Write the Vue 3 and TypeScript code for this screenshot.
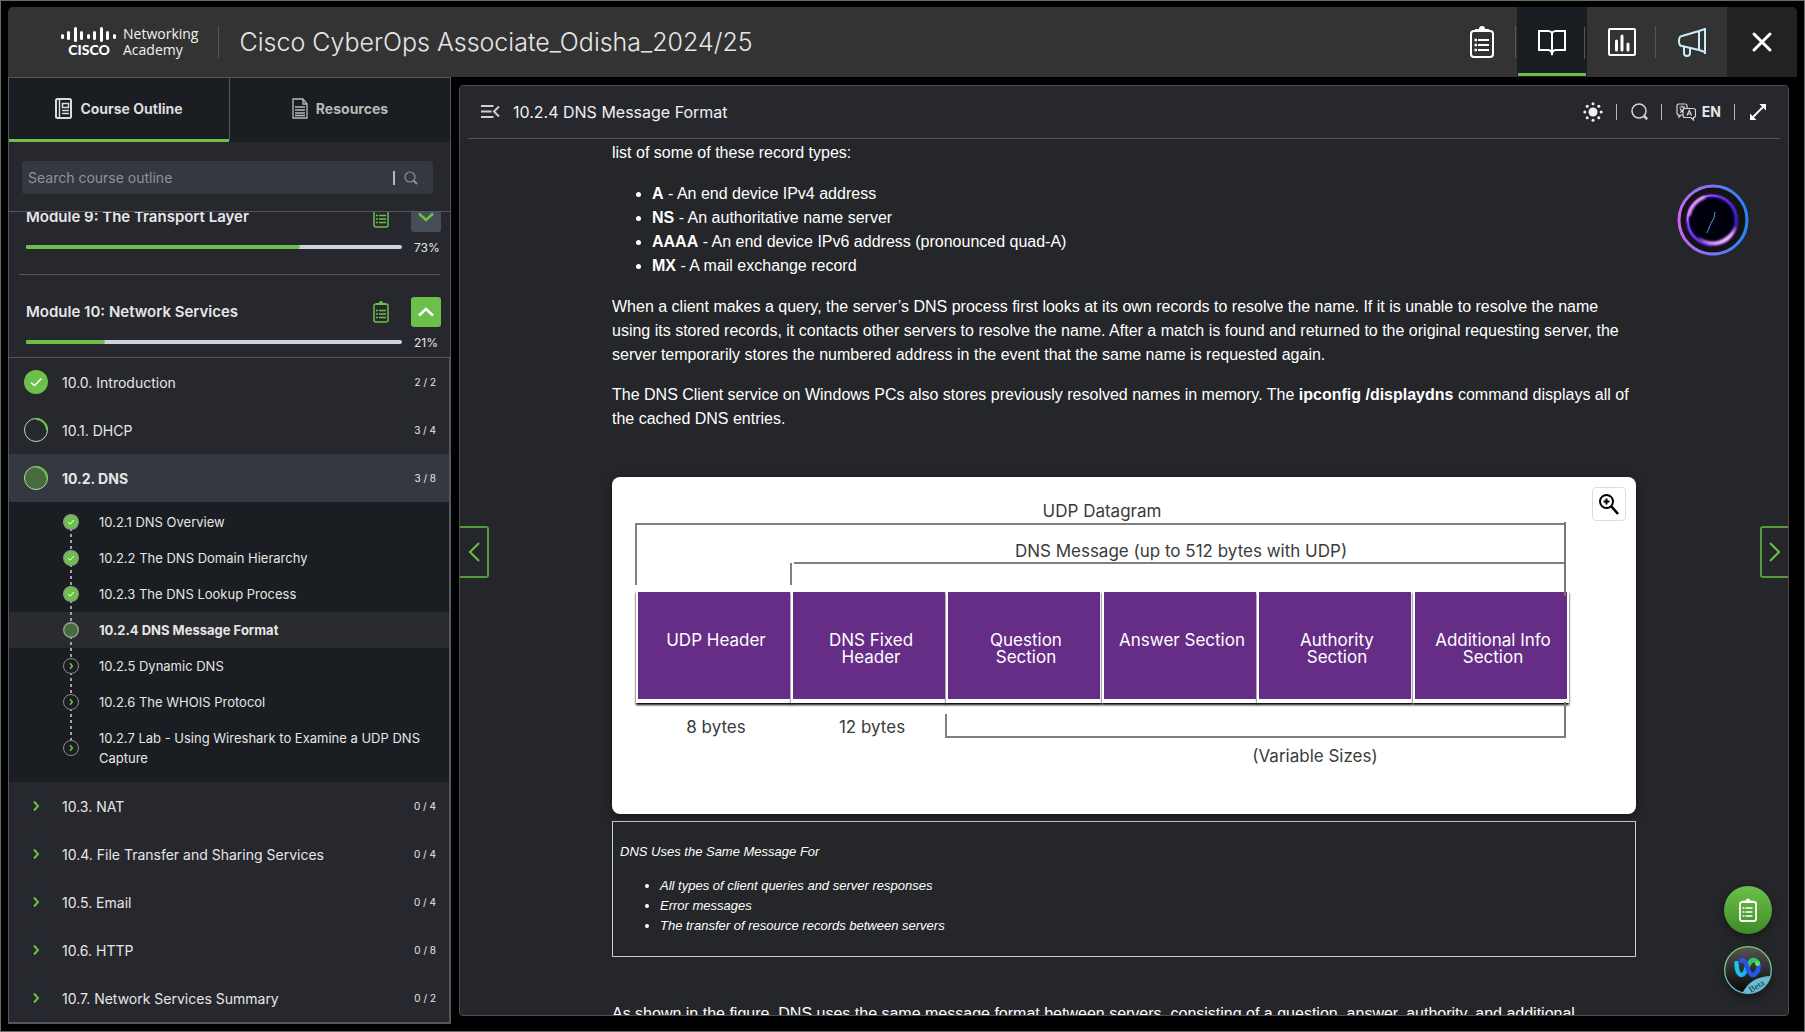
<script setup lang="ts">
import { ref } from 'vue'

type State = 'done' | 'partial' | 'current' | 'todo'

interface Topic {
  label: string
  state: State
}

interface Section {
  label: string
  count: string
  state: State
  topics?: Topic[]
}

const query = ref('')

const sections: Section[] = [
  { label: '10.0. Introduction', count: '2 / 2', state: 'done' },
  { label: '10.1. DHCP', count: '3 / 4', state: 'partial' },
  {
    label: '10.2. DNS',
    count: '3 / 8',
    state: 'current',
    topics: [
      { label: '10.2.1 DNS Overview', state: 'done' },
      { label: '10.2.2 The DNS Domain Hierarchy', state: 'done' },
      { label: '10.2.3 The DNS Lookup Process', state: 'done' },
      { label: '10.2.4 DNS Message Format', state: 'current' },
      { label: '10.2.5 Dynamic DNS', state: 'todo' },
      { label: '10.2.6 The WHOIS Protocol', state: 'todo' },
      { label: '10.2.7 Lab - Using Wireshark to Examine a UDP DNS Capture', state: 'todo' },
    ],
  },
  { label: '10.3. NAT', count: '0 / 4', state: 'todo' },
  { label: '10.4. File Transfer and Sharing Services', count: '0 / 4', state: 'todo' },
  { label: '10.5. Email', count: '0 / 4', state: 'todo' },
  { label: '10.6. HTTP', count: '0 / 8', state: 'todo' },
  { label: '10.7. Network Services Summary', count: '0 / 2', state: 'todo' },
]

const modules = [
  { title: 'Module 9: The Transport Layer', percent: 73, open: false },
  { title: 'Module 10: Network Services', percent: 21, open: true },
]

const records = [
  { name: 'A', text: 'An end device IPv4 address' },
  { name: 'NS', text: 'An authoritative name server' },
  { name: 'AAAA', text: 'An end device IPv6 address (pronounced quad-A)' },
  { name: 'MX', text: 'A mail exchange record' },
]

const logoBars = [
  [1, 7, 5], [7, 4, 9], [14, 0, 15], [20, 4, 9], [27, 7, 5], [33, 4, 9], [40, 0, 15], [46, 4, 9], [53, 7, 5],
]

const fields = [
  { x: 26, lines: ['UDP Header'] },
  { x: 181, lines: ['DNS Fixed', 'Header'] },
  { x: 336, lines: ['Question', 'Section'] },
  { x: 492, lines: ['Answer Section'] },
  { x: 647, lines: ['Authority', 'Section'] },
  { x: 803, lines: ['Additional Info', 'Section'] },
]
</script>

<template>
  <div class="frame">
    <header class="topbar">
      <div class="brand">
        <div class="cisco">
          <svg width="56" height="16" viewBox="0 0 56 16" aria-hidden="true">
            <rect v-for="b in logoBars" :key="b[0]" :x="b[0] - 1" :y="b[1]" width="3" :height="b[2]" rx="1.5" fill="#fff" />
          </svg>
          <span class="cisco-name">CISCO</span>
        </div>
        <div class="academy">Networking<br />Academy</div>
      </div>
      <h1>Cisco CyberOps Associate_Odisha_2024/25</h1>
      <nav class="topnav">
        <button type="button" aria-label="Tasks" class="divided">
          <svg width="24" height="32" viewBox="0 0 24 32" fill="none" stroke="#fff">
            <rect x="1" y="5" width="22" height="26" rx="3" stroke-width="2" />
            <path d="M5 6V3h4a3 3 0 0 1 6 0h4v3z" fill="#fff" stroke="none" />
            <path d="M8 14h11M8 19h11M8 24h11" stroke-width="2" />
            <path d="M4.500 14h2.500M4.500 19h2.500M4.500 24h2.500" stroke-width="2.400" />
          </svg>
        </button>
        <button type="button" aria-label="Course content" class="active divided">
          <svg width="30" height="28" viewBox="0 0 30 28" fill="none" stroke="#fff" stroke-width="2">
            <path d="M15 5Q14 3 11 3H2v19h9q3 0 4 3 1-3 4-3h9V3h-9q-3 0-4 2zM15 5v22" />
          </svg>
        </button>
        <button type="button" aria-label="Grades" class="divided">
          <svg width="28" height="28" viewBox="0 0 28 28" fill="none" stroke="#fff">
            <rect x="1" y="1" width="26" height="26" rx="1" stroke-width="2" />
            <path d="M8.500 13v9M14 8v14M20 16v6" stroke-width="3" stroke-linecap="round" />
          </svg>
        </button>
        <button type="button" aria-label="Announcements">
          <svg width="30" height="30" viewBox="0 0 30 30" fill="none" stroke="#c9ecf8" stroke-width="2" stroke-linejoin="round">
            <path d="M22 4L5 9q-3 0-3 5t3 5l17 4" />
            <path d="M22 4v19M28 1v26" />
            <path d="M22 4l6-2M22 23l6 2" />
            <path d="M7 20v6q0 3 3 3t3-3v-5" />
          </svg>
        </button>
        <button type="button" aria-label="Close" class="close">
          <svg width="22" height="22" viewBox="0 0 22 22" stroke="#fff" stroke-width="3" stroke-linecap="round">
            <path d="M3 3l16 16M19 3L3 19" />
          </svg>
        </button>
      </nav>
    </header>

    <div class="body">
      <aside class="sidebar">
        <div class="tabs">
          <button type="button" class="tab on">
            <svg width="17" height="21" viewBox="0 0 17 21" fill="none" stroke="currentColor">
              <rect x="1" y="1" width="15" height="19" rx="1.500" stroke-width="2" />
              <path d="M4.500 1v19" stroke-width="1.500" />
              <rect x="7.500" y="5.500" width="6" height="4" stroke-width="1.500" />
              <path d="M7 12.500h7M7 15.500h7" stroke-width="1.500" />
            </svg>
            Course Outline
          </button>
          <button type="button" class="tab">
            <svg width="16" height="21" viewBox="0 0 16 21" fill="none" stroke="currentColor" stroke-width="1.300">
              <path d="M1 1h10l4 5v14H1zM11 1v5h4" />
              <path d="M3 9h10M3 12h10M3 15h10M3 17.500h10" />
            </svg>
            Resources
          </button>
        </div>

        <label class="search">
          <input v-model="query" type="text" placeholder="Search course outline" aria-label="Search course outline" />
          <i class="bar"></i>
          <svg width="14" height="14" viewBox="0 0 14 14" fill="none" stroke="#8b8f94">
            <circle cx="6" cy="6" r="5" stroke-width="1.200" />
            <path d="M9.800 9.800l3.200 3.200" stroke-width="2" />
          </svg>
        </label>

        <div class="outline">
          <div class="outline-inner">
            <section v-for="m in modules" :key="m.title" class="module">
              <div class="module-head">
                <h2>{{ m.title }}</h2>
                <svg width="16" height="22" viewBox="0 0 16 22" fill="none" stroke="#6cc04a">
                  <rect x="1" y="3" width="14" height="18" rx="2" stroke-width="1.500" />
                  <path d="M3 4V2h3a2 2 0 0 1 4 0h3v2z" fill="#6cc04a" stroke="none" />
                  <path d="M6 9.500h7M6 13h7M6 16.500h7" stroke-width="1.500" />
                  <path d="M3 9.500h2M3 13h2M3 16.500h2" stroke-width="1.500" />
                </svg>
                <button type="button" class="toggle" :class="{ open: m.open }" :aria-label="m.open ? 'Collapse' : 'Expand'">
                  <svg width="16" height="10" viewBox="0 0 16 10" fill="none" stroke="currentColor" stroke-width="2.500">
                    <path :d="m.open ? 'M1 8.500L8 2l7 6.500' : 'M1 1.500L8 8l7-6.500'" />
                  </svg>
                </button>
              </div>
              <div class="progress">
                <div class="track"><div class="fill" :style="{ width: m.percent + '%' }"></div></div>
                <span>{{ m.percent }}%</span>
              </div>
            </section>

            <ul class="sections">
              <li v-for="s in sections" :key="s.label">
                <a href="#" class="row" :class="s.state">
                  <svg width="24" height="24" viewBox="0 0 24 24" fill="none">
                    <template v-if="s.state === 'done'">
                      <circle cx="12" cy="12" r="12" fill="#6cc04a" />
                      <path d="M7 12.500l3.500 3L17.500 8.500" stroke="#fff" stroke-width="1.500" />
                    </template>
                    <template v-else-if="s.state === 'todo'">
                      <circle cx="12" cy="12" r="11.500" stroke="#222f40" />
                      <path d="M10 7.500l4 4.500-4 4.500" stroke="#6cc04a" stroke-width="2" />
                    </template>
                    <template v-else>
                      <circle cx="12" cy="12" r="11.500" :fill="s.state === 'current' ? '#49693f' : 'none'" stroke="#b5dba6" />
                      <path d="M12 1a11 11 0 0 1 11 11" stroke="#6cc04a" stroke-width="2" />
                    </template>
                  </svg>
                  <span class="name">{{ s.label }}</span>
                  <span class="count">{{ s.count }}</span>
                </a>
                <ul v-if="s.topics" class="topics">
                  <li v-for="t in s.topics" :key="t.label">
                    <a href="#" class="topic" :class="t.state">
                      <svg width="16" height="16" viewBox="0 0 16 16" fill="none">
                        <circle v-if="t.state === 'done'" cx="8" cy="8" r="7.300" fill="#6cc04a" stroke="#8d9a89" stroke-width="1.400" />
                        <circle v-else-if="t.state === 'current'" cx="8" cy="8" r="7.300" fill="#49693f" stroke="#93a38d" stroke-width="1.400" />
                        <circle v-else cx="8" cy="8" r="7.500" fill="#1a1d21" stroke="#8a8d90" />
                        <path v-if="t.state === 'done'" d="M5 8.200l2 2L11 6" stroke="#fff" />
                        <path v-if="t.state === 'todo'" d="M7 5.200L9.300 8 7 10.800" stroke="#6cc04a" stroke-width="1.600" />
                      </svg>
                      <span>{{ t.label }}</span>
                    </a>
                  </li>
                </ul>
              </li>
            </ul>
          </div>
        </div>
      </aside>

      <main class="reader">
        <div class="reader-head">
          <button type="button" class="tool" aria-label="Collapse outline">
            <svg width="19" height="13" viewBox="0 0 19 13" fill="none" stroke="#d0d0d2" stroke-width="2">
              <path d="M0 1h12.500M0 6.500h10.500M0 12h12.500M18 1.500L13 6.500l5 5" />
            </svg>
          </button>
          <h2>10.2.4 DNS Message Format</h2>
          <div class="tools">
            <button type="button" class="tool sun" aria-label="Theme">
              <svg width="20" height="20" viewBox="0 0 20 20" fill="#f0f0f0">
                <circle cx="10" cy="10" r="4.500" />
                <circle cx="10" cy="1.800" r="1.500" /><circle cx="10" cy="18.200" r="1.500" />
                <circle cx="1.800" cy="10" r="1.500" /><circle cx="18.200" cy="10" r="1.500" />
                <circle cx="4.200" cy="4.200" r="1.500" /><circle cx="15.800" cy="4.200" r="1.500" />
                <circle cx="4.200" cy="15.800" r="1.500" /><circle cx="15.800" cy="15.800" r="1.500" />
              </svg>
            </button>
            <button type="button" class="tool find" aria-label="Search">
              <svg width="17" height="17" viewBox="0 0 17 17" fill="none" stroke="#d4d4d4">
                <circle cx="8" cy="8" r="7" stroke-width="1.500" />
                <path d="M12.500 12.500l3.700 3.700" stroke-width="2.500" />
              </svg>
            </button>
            <button type="button" class="tool lang">
              <svg width="20" height="18" viewBox="0 0 20 18" fill="none" stroke="#d4d4d4" stroke-width="1.200">
                <path d="M7 12H5l-2 2v-2q-2 0-2-2V3q0-2 2-2h6q2 0 2 2v2" />
                <path d="M3.500 4h5.500M6.200 2.500v1.500M4 9.500Q7.500 8 8 4M4.200 5.500q1 3 3 3.500" />
                <path d="M9 5.500h8.500q2 0 2 2v5q0 2-2 2v2.500L15 14.500H9q-2 0-2-2v-5q0-2 2-2z" fill="#27282d" />
                <path d="M11 12.500L13.300 7.500l2.300 5M11.800 11h3" />
              </svg>
              EN
            </button>
            <button type="button" class="tool" aria-label="Full screen">
              <svg width="18" height="18" viewBox="0 0 18 18" fill="#fff" stroke="#fff">
                <path d="M4 14L14 4" stroke-width="1.800" />
                <path d="M10.500 1H17v6.500zM1 10.500V17h6.500z" stroke="none" />
              </svg>
            </button>
          </div>
        </div>

        <div class="page">
          <article>
            <p>list of some of these record types:</p>
            <ul>
              <li v-for="r in records" :key="r.name"><strong>{{ r.name }}</strong> - {{ r.text }}</li>
            </ul>
            <p>
              When a client makes a query, the server’s DNS process first looks at its own records to resolve the name. If it is unable to resolve the name
              using its stored records, it contacts other servers to resolve the name. After a match is found and returned to the original requesting server, the
              server temporarily stores the numbered address in the event that the same name is requested again.
            </p>
            <p>
              The DNS Client service on Windows PCs also stores previously resolved names in memory. The <strong>ipconfig /displaydns</strong> command displays all of
              the cached DNS entries.
            </p>

            <figure>
              <svg class="diagram" viewBox="0 0 1024 337" role="img" aria-label="UDP datagram layout">
                <defs>
                  <filter id="drop" x="-5%" y="-10%" width="110%" height="125%">
                    <feDropShadow dx="0" dy="2" stdDeviation="1.200" flood-color="#000" flood-opacity="1" />
                  </filter>
                </defs>
                <g fill="none" stroke="#808080" stroke-width="2">
                  <path d="M24 108V47H953" />
                  <path d="M179 108V86M182 86H953" />
                  <path d="M334 237V260H954" />
                </g>
                <g v-for="f in fields" :key="f.x">
                  <rect :x="f.x - 2" y="114" width="156" height="112" fill="#fff" filter="url(#drop)" />
                </g>
                <rect x="22" y="108" width="937" height="6" fill="#fff" />
                <g v-for="f in fields" :key="f.x">
                  <rect :x="f.x" y="115" width="152" height="107" fill="#662d87" />
                  <text v-for="(line, i) in f.lines" :key="line" class="inbox" :x="f.x + 78" :y="169 + i * 17">{{ line }}</text>
                </g>
                <path d="M953 45V119M953 225V261" stroke="#777" stroke-width="2" />
                <text x="490" y="40">UDP Datagram</text>
                <text x="569" y="80">DNS Message (up to 512 bytes with UDP)</text>
                <text x="104" y="256">8 bytes</text>
                <text x="260" y="256">12 bytes</text>
                <text x="703" y="285">(Variable Sizes)</text>
              </svg>
              <button type="button" class="zoom" aria-label="Zoom in">
                <svg width="20" height="21" viewBox="0 0 20 21" fill="none" stroke="#000" stroke-width="2">
                  <circle cx="7.500" cy="7.500" r="6.500" />
                  <path d="M12 12l7 8" stroke-width="2.600" />
                  <path d="M4.500 7.500h6M7.500 4.500v6" stroke-width="2" />
                </svg>
              </button>
            </figure>

            <div class="note">
              <p>DNS Uses the Same Message For</p>
              <ul>
                <li>All types of client queries and server responses</li>
                <li>Error messages</li>
                <li>The transfer of resource records between servers</li>
              </ul>
            </div>

            <p>
              As shown in the figure, DNS uses the same message format between servers, consisting of a question, answer, authority, and additional
              information for all types of client queries and server responses, error messages, and the transfer of resource record information.
            </p>
          </article>
        </div>

        <button type="button" class="pager prev" aria-label="Previous">
          <svg width="12" height="20" viewBox="0 0 12 20" fill="none" stroke="#6cc04a" stroke-width="2"><path d="M11 1L2 10l9 9" /></svg>
        </button>
        <button type="button" class="pager next" aria-label="Next">
          <svg width="12" height="20" viewBox="0 0 12 20" fill="none" stroke="#6cc04a" stroke-width="2"><path d="M1 1l9 9-9 9" /></svg>
        </button>

        <button type="button" class="orb" aria-label="Assistant">
          <svg width="72" height="72" viewBox="0 0 72 72" fill="none">
            <defs>
              <linearGradient id="ring" x1="0" y1="0" x2="1" y2="0"><stop offset="0" stop-color="#c766f5" /><stop offset="1" stop-color="#2484ff" /></linearGradient>
              <linearGradient id="glow" x1="0" y1="0" x2="1" y2="0.600"><stop offset="0" stop-color="#e08cff" /><stop offset="0.500" stop-color="#7a2fe0" /><stop offset="1" stop-color="#3a1fb0" /></linearGradient>
              <filter id="soft"><feGaussianBlur stdDeviation="1" /></filter>
            </defs>
            <circle cx="36" cy="36" r="34" fill="#14130f" stroke="url(#ring)" stroke-width="3" />
            <circle cx="35" cy="36" r="24.500" fill="#03020a" stroke="#3a1fb0" stroke-width="3" filter="url(#soft)" />
            <circle cx="35" cy="36" r="24.500" stroke="url(#glow)" stroke-width="2" />
            <path d="M12 32q3-14 16-19" stroke="#f7a0f7" stroke-width="2.500" filter="url(#soft)" />
            <path d="M22 54q20 12 37-11-3 12-13 16-14 5-24-5z" fill="#ffd6ff" stroke="#c86cf5" filter="url(#soft)" />
            <path d="M10 38q2 20 24 24" stroke="#5a2be0" stroke-width="1.200" />
            <path d="M38 28l-1 6-3 5-4 10" stroke="#3f9be0" />
          </svg>
        </button>

        <div class="fabs">
          <button type="button" class="fab tasks" aria-label="Open tasks">
            <svg width="18" height="24" viewBox="0 0 18 24" fill="none" stroke="#fff">
              <rect x="1" y="4" width="16" height="19" rx="2" stroke-width="1.800" />
              <path d="M4 5V2.500h3a2 2 0 0 1 4 0h3V5z" fill="#fff" stroke="none" />
              <path d="M6.500 10h7M6.500 14h7M6.500 18h7M3.500 10h2M3.500 14h2M3.500 18h2" stroke-width="1.600" />
            </svg>
          </button>
          <button type="button" class="fab webex" aria-label="Webex beta">
            <svg width="48" height="48" viewBox="0 0 48 48" fill="none">
              <defs>
                <linearGradient id="wbg" x1="0" y1="0" x2="0" y2="1"><stop offset="0" stop-color="#555" /><stop offset="1" stop-color="#050505" /></linearGradient>
                <linearGradient id="wring" x1="0" y1="0" x2="0" y2="1"><stop offset="0" stop-color="#7cc35f" /><stop offset="1" stop-color="#62b8d8" /></linearGradient>
                <linearGradient id="wl" x1="0" y1="0" x2="1" y2="0"><stop offset="0" stop-color="#19c8f0" /><stop offset="1" stop-color="#2f9ff5" /></linearGradient>
                <clipPath id="disc"><circle cx="24" cy="24" r="23.500" /></clipPath>
              </defs>
              <circle cx="24" cy="24" r="23.500" fill="url(#wbg)" />
              <g stroke-linecap="round" stroke-width="4.500">
                <path d="M34 17q-2-3-5-3-3 1-5 6" stroke="#35c46a" />
                <path d="M12.500 17q0 11 5 12 3 0 5-7" stroke="url(#wl)" />
                <path d="M17 14.500q4-1 6 6t5 8.500q6 0 7-10" stroke="#2456ee" />
              </g>
              <circle cx="33.500" cy="17.500" r="2.500" fill="#5ce05f" />
              <path d="M18 48q8-18 30-18v18z" fill="#66bcd0" clip-path="url(#disc)" />
              <circle cx="24" cy="24" r="23.300" stroke="url(#wring)" stroke-width="1.300" />
              <text x="33" y="43" class="beta" transform="rotate(-32 33 41)">Beta</text>
            </svg>
          </button>
        </div>
      </main>
    </div>
  </div>
</template>

<style>
html, body, #app { height: 100%; }
body { margin: 0; background: #000; }
</style>

<style scoped>
* { box-sizing: border-box; }
button { font: inherit; color: inherit; background: none; border: 0; padding: 0; margin: 0; cursor: pointer; }
svg { display: block; flex: none; }
a { color: inherit; text-decoration: none; }
h1, h2, p, ul, figure { margin: 0; padding: 0; }

.frame {
  height: 100vh;
  display: flex;
  flex-direction: column;
  padding: 6px 7px 7px;
  border: 1px solid #6b6d6d;
  background: #000;
  color: #e6e6e7;
  font-family: Inter, "Liberation Sans", sans-serif;
}

/* top bar */
.topbar {
  display: flex;
  align-items: center;
  flex: none;
  height: 70px;
  padding-left: 53px;
  background: #333;
  border-radius: 5px 5px 0 0;
  overflow: hidden;
}
.brand { display: flex; align-items: center; gap: 6px; height: 32px; padding-right: 20px; border-right: 1px solid #57565f; }
.cisco { display: flex; flex-direction: column; align-items: center; }
.cisco-name { font: 900 14px/14px Lato, sans-serif; color: #fff; }
.academy { font: 400 14px/16px "Open Sans", sans-serif; color: #f2f2f2; }
h1 { margin-left: 20px; font-size: 25px; font-weight: 300; line-height: 32px; white-space: nowrap; }
.topnav { display: flex; margin-left: auto; height: 100%; }
.topnav button { display: flex; align-items: center; justify-content: center; position: relative; width: 70px; }
.topnav .active { background: #1a1d21; border: 1px solid #1a1d21; }
.topnav .active::before { content: ""; position: absolute; left: 0; right: 0; bottom: 0; height: 3px; background: #6cc04a; }
.topnav .divided::after { content: ""; position: absolute; right: 1px; top: 19px; width: 1px; height: 32px; background: #55555b; }
.topnav .close { background: #222; }

.body { display: flex; flex: 1; min-height: 0; }

/* sidebar */
.sidebar {
  display: flex;
  flex-direction: column;
  flex: 0 0 443px;
  min-height: 0;
  border: 1px solid #55565e;
  background: #27282d;
}
.tabs { display: flex; flex: none; height: 64px; background: #1a1d21; }
.tab {
  display: flex;
  align-items: center;
  justify-content: center;
  gap: 8px;
  flex: 1;
  border-bottom: 3px solid transparent;
  font-size: 14px;
  font-weight: 700;
  color: #b8b9bb;
}
.tab.on { color: #dcdcdd; border-bottom-color: #6cc04a; }
.tab + .tab { border-left: 1px solid #55565e; }
.search {
  display: flex;
  align-items: center;
  flex: none;
  height: 33px;
  margin: 19px 17px 17px 13px;
  padding: 0 15px 0 6px;
  border-radius: 3px;
  background: #34393f;
}
.search input { flex: 1; min-width: 0; padding: 0; border: 0; outline: 0; background: none; color: #e6e6e7; font: 400 14px/20px Inter, sans-serif; }
.search input::placeholder { color: #8f9295; opacity: 1; }
.search .bar { width: 2px; height: 14px; margin-right: 9px; background: #b9b9b0; }

.outline { flex: 1; min-height: 0; overflow: hidden; border-top: 1px solid #55565e; }
.outline-inner { margin-top: -10px; }
.module { padding: 0 9px 13px 17px; }
.module + .module { padding-top: 22px; }
.module:first-child { position: relative; padding-bottom: 26px; }
.module:first-child::after { content: ""; position: absolute; left: 10px; right: 10px; bottom: 0; height: 1px; background: #55565e; }
.module-head { display: flex; align-items: center; height: 30px; }
.module-head h2 { flex: 1; font-size: 15px; font-weight: 600; line-height: 20px; }
.toggle { display: flex; align-items: center; justify-content: center; width: 30px; height: 30px; margin-left: 22px; border-radius: 3px; background: #474e57; color: #6cc04a; }
.toggle.open { background: #6cc04a; color: #fff; }
.progress { display: flex; align-items: center; height: 4px; margin-top: 13px; font-size: 12px; }
.progress span { width: 27px; }
.track { flex: 1; height: 4px; margin-right: 12px; border-radius: 2px; background: #cdd2dc; overflow: hidden; }
.fill { height: 4px; border-radius: 0 2px 2px 0; background: #6cc04a; }

.sections { list-style: none; border-top: 1px solid #55565e; border-right: 1px solid #55565e; border-bottom: 1px solid #55565e; }
.row { display: flex; align-items: center; height: 48px; padding: 0 13px 0 15px; font-size: 14px; }
.row .name { flex: 1; margin-left: 14px; }
.row .count { font-size: 10px; }
.row.current { background: #343840; }
.row.current .name { font-weight: 700; }
.topics { list-style: none; padding: 2px 0 6px; background: #1a1d21; }
.topic { position: relative; display: flex; align-items: center; gap: 20px; padding: 8px 20px 8px 54px; font-size: 13px; line-height: 20px; }
.topic.current { background: #2a2b2e; font-weight: 700; }
.topic svg { position: relative; }
.topic::before { content: ""; position: absolute; left: 61px; top: 0; bottom: 0; width: 2px; background: repeating-linear-gradient(#a0a2a3 0 3px, transparent 3px 6px); }
li:first-child > .topic::before { top: 50%; }
li:last-child > .topic::before { bottom: 50%; }

/* reader */
.reader {
  position: relative;
  display: flex;
  flex-direction: column;
  flex: 1;
  min-width: 0;
  margin: 8px;
  border: 1px solid #4d4e56;
  border-radius: 4px;
  background: #242629;
  overflow: hidden;
}
.reader-head { display: flex; align-items: center; flex: none; height: 53px; padding: 0 21px 2px; background: linear-gradient(#55565b, #55565b) 8px 100% / calc(100% - 16px) 1px no-repeat #27282d; }
.reader-head h2 { margin-left: 13px; font-size: 16px; font-weight: 400; line-height: 24px; color: #f0f0f0; }
.tools { display: flex; align-items: center; margin-left: auto; }
.tool { display: flex; align-items: center; }
.tools .tool + .tool::before { content: ""; width: 1px; height: 16px; margin: 0 14px 0 13px; background: #b5b5b5; }
.lang { font-size: 14px; font-weight: 700; }
.lang svg { margin-right: 6px; }

.page { flex: 1; min-height: 0; overflow: hidden; }
article { max-width: 1024px; margin: 0 auto; padding-top: 2px; font: 400 16px/24px "Liberation Sans", Arial, sans-serif; color: #fff; }
article > p { margin-bottom: 16px; }
article > ul { margin: 17px 0; padding-left: 40px; }

figure { position: relative; margin-top: 46px; border-radius: 8px; background: #fff; box-shadow: 0 2px 8px rgba(0, 0, 0, 0.5); }
.diagram { width: 100%; height: auto; font-family: Inter, sans-serif; }
.diagram text { font-size: 17px; fill: #3b3b3b; text-anchor: middle; }
.diagram .inbox { fill: #fff; }
.zoom { position: absolute; top: 10px; right: 10px; display: flex; align-items: center; justify-content: center; width: 34px; height: 34px; border: 1px solid #ddd; border-radius: 4px; background: #fff; }

.note { margin: 7px 0 45px; padding: 20px 7px; border: 1px solid #ccc; font-size: 13px; line-height: 20px; font-style: italic; }
.note ul { margin-top: 14px; padding-left: 40px; }

.pager { position: absolute; top: 440px; display: flex; align-items: center; justify-content: center; width: 29px; height: 52px; border: 2px solid #559a3e; background: #242629; }
.prev { left: 0; border-left: 0; border-radius: 0 3px 3px 0; }
.next { right: 0; width: 28px; border-right: 0; border-radius: 3px 0 0 3px; }

.orb { position: absolute; top: 98px; right: 39px; }
.fabs { position: absolute; right: 16px; bottom: 21px; display: flex; flex-direction: column; gap: 12px; }
.fab { display: flex; align-items: center; justify-content: center; width: 48px; height: 48px; border-radius: 50%; box-shadow: 0 4px 10px rgba(0, 0, 0, 0.4); }
.tasks { background: linear-gradient(#6cc04a, #3f8a28); }
.beta { font: 9px "Liberation Serif", serif; fill: #17343c; text-anchor: middle; }
</style>
